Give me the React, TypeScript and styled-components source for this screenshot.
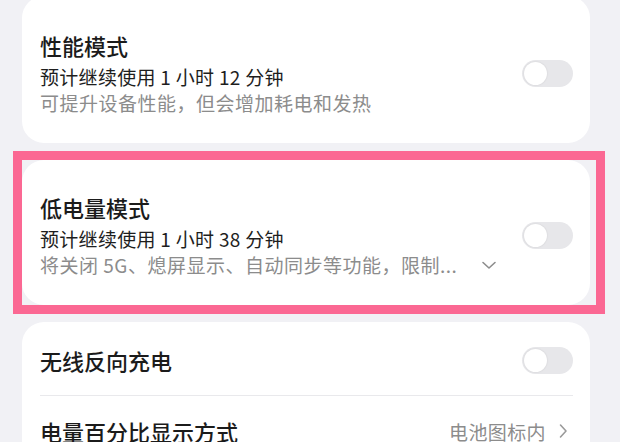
import React from 'react'
import styled, { createGlobalStyle } from 'styled-components'

const GlobalStyle = createGlobalStyle`
  html, body {
    margin: 0;
    padding: 0;
    background: #f1f1f5;
    font-family: "Noto Sans CJK SC", "Noto Sans", sans-serif;
    overflow: hidden;
  }
`;

const Page = styled.div`
  width: 620px;
  height: 442px;
  overflow: hidden;
  padding: 0 30px 0 22px;
  box-sizing: border-box;
`;

const List = styled.div`
  display: flex;
  flex-direction: column;
  gap: 17px;
  margin-top: -4px;
`;

const Card = styled.div<{ $highlight?: boolean }>`
  position: relative;
  background: #fff;
  border-radius: 22px;
  padding: 0 17px 0 18px;

  ${({ $highlight }) => $highlight && `
    &::after {
      content: '';
      position: absolute;
      left: -9px;
      top: -9px;
      right: -15px;
      bottom: -9px;
      border: 9px solid #fb6893;
      pointer-events: none;
    }
  `}
`;

const ModeRow = styled.div<{ $top?: number }>`
  display: flex;
  align-items: center;
  justify-content: space-between;
  padding: ${({ $top = 35 }) => $top}px 0 28px;
`;

const TextBlock = styled.div`
  display: flex;
  flex-direction: column;
`;

const Title = styled.div`
  font-size: 22px;
  line-height: 28px;
  font-weight: 500;
  color: #1b1b1b;
`;

const Subtitle = styled.div`
  margin-top: 6px;
  font-size: 19px;
  line-height: 24px;
  color: #1e1e1e;
  letter-spacing: 0.3px;
`;

const Desc = styled.div`
  margin-top: 2px;
  font-size: 19px;
  line-height: 24px;
  color: #8c8c8c;
  letter-spacing: 0.5px;
  display: flex;
  align-items: center;
  gap: 24px;
`;

const Toggle = styled.div`
  flex: none;
  width: 51px;
  height: 27px;
  border-radius: 14px;
  background: #e7e7ea;
  display: flex;
  align-items: center;
  padding: 0 2px;
  box-sizing: border-box;

  &::before {
    content: '';
    width: 23px;
    height: 23px;
    border-radius: 50%;
    background: #fff;
    box-shadow: 0 0 2px rgba(0, 0, 0, 0.12);
  }
`;

const SettingsCard = styled(Card)`
  padding-top: 3px;
`;

const SettingRow = styled.div`
  height: 70px;
  display: flex;
  align-items: center;
  justify-content: space-between;
`;

const Divider = styled.div`
  height: 1px;
  background: #e9e9ec;
`;

const Value = styled.div`
  display: flex;
  align-items: center;
  gap: 9px;
  font-size: 19px;
  color: #8c8c8c;
  letter-spacing: 0.4px;
  margin-right: 2px;
`;

const Chevron = ({ dir }: { dir: 'down' | 'right' }) => (
  <svg width="16" height="16" viewBox="0 0 16 16" fill="none">
    {dir === 'down' ? (
      <path d="M2 5.5 L8 11 L14 5.5" stroke="#8c8c8c" strokeWidth="1.6" strokeLinecap="round" strokeLinejoin="round" />
    ) : (
      <path d="M5.5 2 L11 8 L5.5 14" stroke="#9a9a9a" strokeWidth="1.6" strokeLinecap="round" strokeLinejoin="round" />
    )}
  </svg>
);

const App = () => {
  return (
    <Page>
      <GlobalStyle />
      <List>
        <Card>
          <ModeRow>
            <TextBlock>
              <Title>性能模式</Title>
              <Subtitle>预计继续使用 1 小时 12 分钟</Subtitle>
              <Desc>可提升设备性能，但会增加耗电和发热</Desc>
            </TextBlock>
            <Toggle />
          </ModeRow>
        </Card>

        <Card $highlight>
          <ModeRow $top={33}>
            <TextBlock>
              <Title>低电量模式</Title>
              <Subtitle>预计继续使用 1 小时 38 分钟</Subtitle>
              <Desc>
                <span>将关闭 5G、熄屏显示、自动同步等功能，限制...</span>
                <Chevron dir="down" />
              </Desc>
            </TextBlock>
            <Toggle />
          </ModeRow>
        </Card>

        <SettingsCard>
          <SettingRow>
            <Title>无线反向充电</Title>
            <Toggle />
          </SettingRow>
          <Divider />
          <SettingRow>
            <Title>电量百分比显示方式</Title>
            <Value>
              <span>电池图标内</span>
              <Chevron dir="right" />
            </Value>
          </SettingRow>
        </SettingsCard>
      </List>
    </Page>
  )
}

export default App
